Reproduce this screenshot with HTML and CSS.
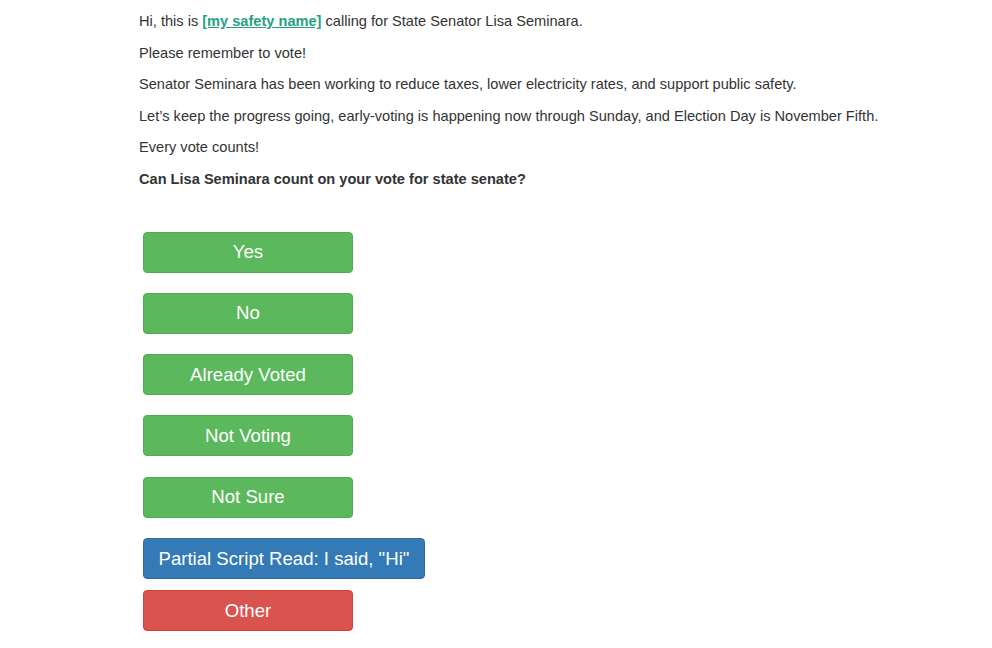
FILE: index.html
```html
<!DOCTYPE html>
<html lang="en">
<head>
  <meta charset="UTF-8">
  <meta name="viewport" content="width=device-width, initial-scale=1.0">
  <title>Call Script</title>
  <link rel="stylesheet" href="styles.css">
</head>
<body>
  <div class="script">
    <p>Hi, this is <a href="#" class="safety-name">[my safety name]</a> calling for State Senator Lisa Seminara.</p>
    <p>Please remember to vote!</p>
    <p>Senator Seminara has been working to reduce taxes, lower electricity rates, and support public safety.</p>
    <p>Let’s keep the progress going, early-voting is happening now through Sunday, and Election Day is November Fifth.</p>
    <p>Every vote counts!</p>
    <p><strong>Can Lisa Seminara count on your vote for state senate?</strong></p>
  </div>

  <div class="answers">
    <button class="btn btn-success">Yes</button>
    <button class="btn btn-success">No</button>
    <button class="btn btn-success">Already Voted</button>
    <button class="btn btn-success">Not Voting</button>
    <button class="btn btn-success">Not Sure</button>
    <button class="btn btn-primary btn-partial">Partial Script Read: I said, "Hi"</button>
    <button class="btn btn-danger">Other</button>
  </div>
</body>
</html>
```

FILE: styles.css
```css
body {
  margin: 0;
  font-family: "Liberation Sans", Arial, sans-serif;
  font-size: 14.6px;
  color: #333;
  background: #fff;
}
.script {
  padding: 11px 0 0 139px;
}
.script p {
  margin: 0 0 10.6px;
  line-height: 21px;
}
.safety-name {
  color: #26a085;
  font-weight: bold;
  text-decoration: underline;
}
.answers {
  display: flex;
  flex-direction: column;
  align-items: flex-start;
  padding: 31px 0 0 143px;
}
.btn {
  min-width: 210px;
  margin-bottom: 20.3px;
  padding: 7.5px 14.5px;
  border: 1px solid transparent;
  border-radius: 4px;
  font-family: "Liberation Sans", Arial, sans-serif;
  font-size: 18.6px;
  line-height: 24px;
  color: #fff;
  text-align: center;
  cursor: pointer;
}
.btn-success {
  background-color: #5cb85c;
  border-color: #4cae4c;
}
.btn-primary {
  background-color: #337ab7;
  border-color: #2e6da4;
}
.btn-danger {
  background-color: #d9534f;
  border-color: #d43f3a;
}
.btn-partial {
  margin-bottom: 11px;
}
```
